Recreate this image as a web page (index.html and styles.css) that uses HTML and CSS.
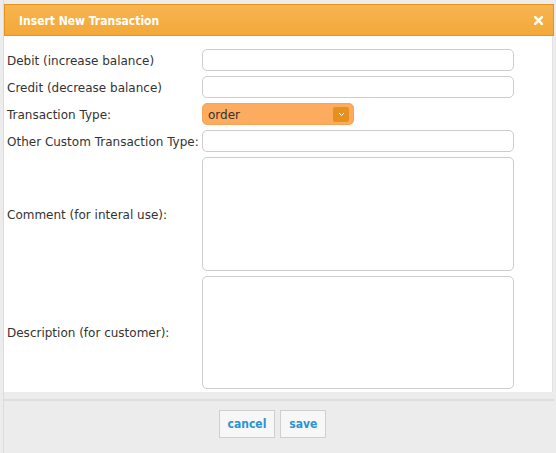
FILE: index.html
```html
<!DOCTYPE html>
<html>
<head>
<meta charset="utf-8">
<link rel="stylesheet" href="styles.css">
</head>
<body>
<div class="dialog">
  <div class="header">
    <span class="title">Insert New Transaction</span>
    <svg class="close" width="9" height="9" viewBox="0 0 9 9"><path d="M1.2 1.2 L7.8 7.8 M7.8 1.2 L1.2 7.8" stroke="#fff" stroke-width="2.6" stroke-linecap="square"/></svg>
  </div>
  <div class="body">
    <div class="form">
      <label class="lbl">Debit (increase balance)</label>
      <div class="field"><input class="input" type="text"></div>
      <label class="lbl">Credit (decrease balance)</label>
      <div class="field"><input class="input" type="text"></div>
      <label class="lbl">Transaction Type:</label>
      <div class="field">
        <div class="select"><span>order</span><span class="arrow"><svg width="7" height="5" viewBox="0 0 7 5"><path d="M1 1 L3.5 3.5 L6 1" stroke="#fff" stroke-width="1" fill="none"/></svg></span></div>
      </div>
      <label class="lbl">Other Custom Transaction Type:</label>
      <div class="field"><input class="input" type="text"></div>
      <label class="lbl">Comment (for interal use):</label>
      <div class="field"><textarea class="area a1"></textarea></div>
      <label class="lbl">Description (for customer):</label>
      <div class="field"><textarea class="area a2"></textarea></div>
    </div>
  </div>
  <div class="footer">
    <button class="btn">cancel</button>
    <button class="btn">save</button>
  </div>
</div>
</body>
</html>
```
FILE: styles.css
```css
html, body { margin: 0; padding: 0; }
body {
  background: #ececec;
  font-family: "DejaVu Sans", sans-serif;
  font-size: 12px;
  color: #333;
  width: 556px;
  height: 453px;
  overflow: hidden;
}
.dialog {
  box-sizing: border-box;
  height: 453px;
  padding-top: 4px;
  margin-left: 3px;
  width: 551px;
  border-left: 1px solid #dcdcdc;
}
.header {
  height: 30px;
  background: linear-gradient(#f6b550, #f3a83a);
  border: 1px solid #e8921a;
  display: flex;
  align-items: center;
  justify-content: space-between;
  padding: 0 10px 0 14px;
}
.title {
  color: #fff;
  font-weight: bold;
  font-size: 12px;
  font-family: "DejaVu Sans Condensed", "DejaVu Sans", sans-serif;
  padding-top: 1px;
}
.close { display: block; }
.body {
  background: #fff;
  width: 548px;
  padding: 13px 0 3px 0;
  border-right: 1px solid #e2e2e2;
}
.form {
  display: grid;
  grid-template-columns: 195px 312px;
  row-gap: 5px;
  padding-left: 3px;
}
.lbl {
  display: flex;
  align-items: center;
  color: #333;
  padding-top: 1px;
}
.field { display: flex; }
.input, .area {
  box-sizing: border-box;
  width: 312px;
  border: 1px solid #cdcdcd;
  border-radius: 5px;
  background: #fff;
  margin: 0;
  font: inherit;
  resize: none;
}
.input { height: 22px; }
.a1 { height: 114px; }
.a2 { height: 113px; }
.select {
  box-sizing: border-box;
  width: 152px;
  height: 22px;
  background: #fdac5f;
  border: 1px solid #f5a555;
  border-radius: 5px;
  display: flex;
  align-items: center;
  justify-content: space-between;
  padding: 1px 4px 0 5px;
  color: #333;
}
.arrow {
  width: 16px;
  height: 15px;
  background: #e98f1c;
  border-radius: 2px;
  display: flex;
  align-items: center;
  justify-content: center;
}
.arrow svg { display: block; }
.footer {
  margin-top: 7px;
  border-top: 2px solid #dedede;
  padding-top: 9px;
  display: flex;
  justify-content: center;
  gap: 5px;
  padding-right: 13px;
}
.btn {
  height: 28px;
  padding: 0 8px;
  background: #f7f7f7;
  border: 1px solid #cfcfcf;
  color: #2b93d1;
  font-weight: bold;
  font-size: 12px;
  font-family: "DejaVu Sans Condensed", "DejaVu Sans", sans-serif;
  cursor: pointer;
}
```
